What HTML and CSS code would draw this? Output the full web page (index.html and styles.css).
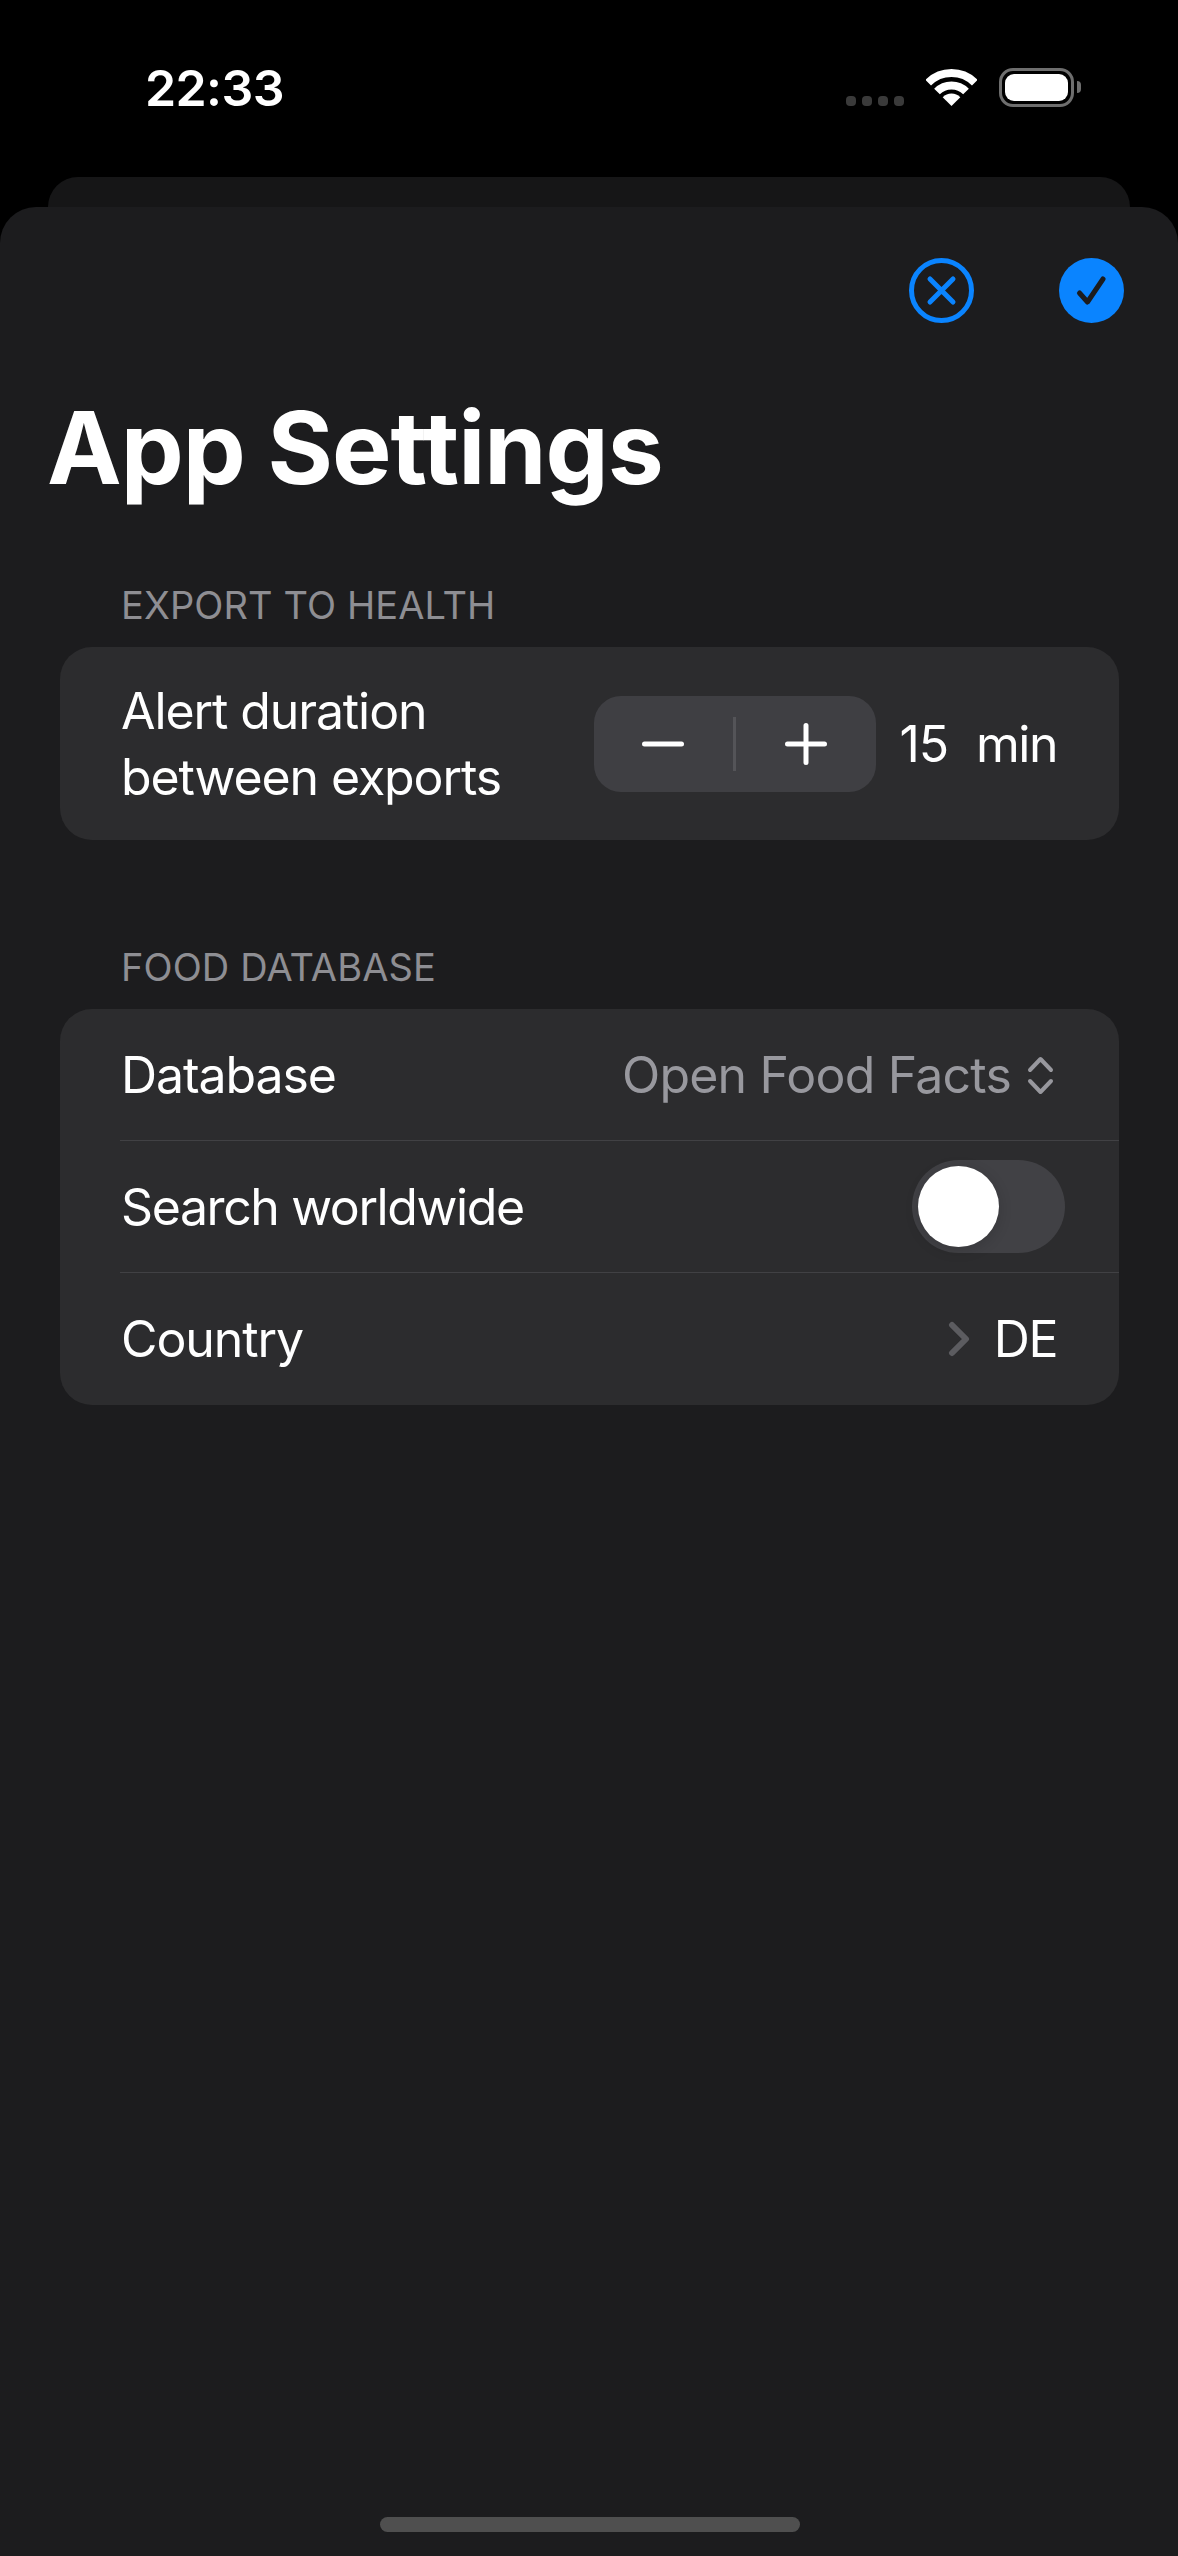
FILE: index.html
```html
<!DOCTYPE html>
<html>
  <head>
    <title>App Settings</title>
    <meta charset="UTF-8" />
    <link rel="stylesheet" href="styles.css">
  </head>
  <body>
    <div class="status-bar">
      <span class="time">22:33</span>
      <div class="status-icons">
        <div class="signal"><i></i><i></i><i></i><i></i></div>
        <svg class="wifi" width="51" height="37" viewBox="0 0 51 37">
          <path d="M2.2 13.7A33 33 0 0 1 48.8 13.7" fill="none" stroke="#fff" stroke-width="8"/>
          <path d="M11 22.5A20.5 20.5 0 0 1 40 22.5" fill="none" stroke="#fff" stroke-width="8"/>
          <path d="M25.5 37L16.7 28.2A12.5 12.5 0 0 1 34.3 28.2Z" fill="#fff"/>
        </svg>
        <div class="battery"><div class="battery-level"></div></div>
        <div class="battery-nub"></div>
      </div>
    </div>

    <div class="back-card"></div>

    <div class="sheet">
      <div class="actions">
        <svg width="65" height="65" viewBox="0 0 65 65">
          <circle cx="32.5" cy="32.5" r="30" fill="none" stroke="#0a84ff" stroke-width="5"/>
          <path d="M21 21L44 44M44 21L21 44" fill="none" stroke="#0a84ff" stroke-width="5" stroke-linecap="round"/>
        </svg>
        <svg width="65" height="65" viewBox="0 0 65 65">
          <circle cx="32.5" cy="32.5" r="32.5" fill="#0a84ff"/>
          <path d="M20.5 35L28.5 44L44 21" fill="none" stroke="#1c1c1e" stroke-width="5" stroke-linecap="round" stroke-linejoin="round"/>
        </svg>
      </div>

      <h1 class="title">App Settings</h1>

      <h2 class="section-title first">EXPORT TO HEALTH</h2>
      <div class="card duration">
        <div class="label">Alert duration<br>between exports</div>
        <div class="duration-value">
          <div class="stepper">
            <div class="stepper-btn">
              <svg width="42" height="42" viewBox="0 0 42 42"><path d="M2.5 21H39.5" stroke="#fff" stroke-width="5" stroke-linecap="round"/></svg>
            </div>
            <div class="stepper-divider"></div>
            <div class="stepper-btn">
              <svg width="42" height="42" viewBox="0 0 42 42"><path d="M2.5 21H39.5M21 2.5V39.5" stroke="#fff" stroke-width="5" stroke-linecap="round"/></svg>
            </div>
          </div>
          <span class="label minutes">15</span>
          <span class="label short">min</span>
        </div>
      </div>

      <h2 class="section-title">FOOD DATABASE</h2>
      <div class="card">
        <div class="row">
          <span class="label">Database</span>
          <div class="row-value">
            <span class="label muted">Open Food Facts</span>
            <svg class="updown" width="27" height="39" viewBox="0 0 27 39"><path d="M3 14L13.5 3L24 14M3 25L13.5 36L24 25" fill="none" stroke="#98989e" stroke-width="4" stroke-linecap="round" stroke-linejoin="round"/></svg>
          </div>
        </div>
        <div class="row">
          <span class="label tight">Search worldwide</span>
          <div class="toggle"><div class="toggle-knob"></div></div>
        </div>
        <div class="row">
          <span class="label">Country</span>
          <div class="row-value country">
            <svg width="22" height="36" viewBox="0 0 22 36"><path d="M4 4L18 18L4 32" fill="none" stroke="#5c5c60" stroke-width="6" stroke-linecap="round" stroke-linejoin="round"/></svg>
            <span class="label short">DE</span>
          </div>
        </div>
      </div>

      <div class="home-bar"></div>
    </div>
  </body>
</html>
```

FILE: styles.css
```css
html,
body {
  height: 100%;
}

body {
  margin: 0;
  background-color: #000;
  color: #fff;
  font-family: Inter, "Noto Sans", sans-serif;
  display: flex;
  flex-direction: column;
}

/* status bar */
.status-bar {
  height: 177px;
  box-sizing: border-box;
  padding: 60px 97px 0 145px;
  display: flex;
  justify-content: space-between;
  align-items: flex-start;
}

.time {
  font-size: 50px;
  font-weight: 600;
  line-height: 56px;
  letter-spacing: -0.6px;
}

.status-icons {
  display: flex;
  align-items: flex-start;
  padding-top: 8px;
}

.signal {
  display: flex;
  gap: 6px;
  margin-top: 28px;
  margin-right: 22px;
}

.signal i {
  width: 10px;
  height: 10px;
  border-radius: 4px;
  background-color: #3a3a3a;
}

.wifi {
  margin-top: 1px;
  margin-right: 22px;
}

.battery {
  width: 75px;
  height: 39px;
  box-sizing: border-box;
  border: 3px solid #6e6e6e;
  border-radius: 14px;
  padding: 3px;
}

.battery-level {
  height: 100%;
  background-color: #fff;
  border-radius: 9px;
}

.battery-nub {
  width: 4px;
  height: 12px;
  margin: 13px 0 0 3px;
  background-color: #6e6e6e;
  border-radius: 0 6px 6px 0;
}

.back-card {
  height: 30px;
  margin: 0 48px;
  background-color: #161617;
  border-radius: 30px 30px 0 0;
}

/* sheet */
.sheet {
  flex: 1;
  background-color: #1c1c1e;
  border-radius: 36px 36px 0 0;
  padding: 51px 59px 0 60px;
  display: flex;
  flex-direction: column;
}

.actions {
  display: flex;
  justify-content: flex-end;
  gap: 85px;
  margin-right: -5px;
}

.title {
  margin: 65px 0 0 -13px;
  font-size: 100px;
  font-weight: 700;
  line-height: 120px;
  letter-spacing: -1px;
}

.section-title {
  margin: 104px 0 0 61px;
  color: #8e8e93;
  font-size: 38px;
  font-weight: 400;
  line-height: 46px;
  letter-spacing: 0.1px;
}

.section-title.first {
  margin-top: 74px;
}

.section-title + .card {
  margin-top: 19px;
}

/* cards */
.card {
  background-color: #2c2c2e;
  border-radius: 32px;
}

.label {
  font-size: 50px;
  font-weight: 400;
  line-height: 66px;
  letter-spacing: -1.1px;
}

.short {
  letter-spacing: -1.5px;
}

.tight {
  letter-spacing: -1.4px;
}

.muted {
  color: #98989e;
  letter-spacing: -0.8px;
}

.duration {
  height: 193px;
  padding: 0 62px 0 61px;
  display: flex;
  justify-content: space-between;
  align-items: center;
}

.duration-value {
  display: flex;
  align-items: center;
}

.minutes {
  margin: 0 28px 0 24px;
}

.stepper {
  width: 282px;
  height: 96px;
  background-color: #3f3f43;
  border-radius: 27px;
  display: flex;
  align-items: center;
}

.stepper-btn {
  flex: 1;
  display: flex;
  justify-content: center;
}

.stepper-divider {
  width: 3px;
  height: 54px;
  background-color: #545458;
}

.row {
  height: 132px;
  margin-left: 60px;
  padding: 0 62px 0 1px;
  display: flex;
  justify-content: space-between;
  align-items: center;
  border-top: 1px solid #414144;
  box-sizing: border-box;
}

.row:first-child {
  height: 131px;
  padding-top: 1px;
  border-top: none;
}

.row:last-child {
  height: 133px;
}

.row-value {
  display: flex;
  align-items: center;
  gap: 16px;
}

.row-value.country {
  gap: 24px;
}

.updown {
  margin-right: 3px;
}

.toggle {
  width: 153px;
  height: 93px;
  margin-right: -8px;
  box-sizing: border-box;
  padding: 6px;
  background-color: #414145;
  border-radius: 47px;
}

.toggle-knob {
  width: 81px;
  height: 81px;
  background-color: #fff;
  border-radius: 50%;
  box-shadow: 0 3px 14px rgba(0, 0, 0, 0.15);
}

.home-bar {
  width: 420px;
  height: 15px;
  margin: auto auto 24px;
  background-color: #4f4f4f;
  border-radius: 8px;
}
```
